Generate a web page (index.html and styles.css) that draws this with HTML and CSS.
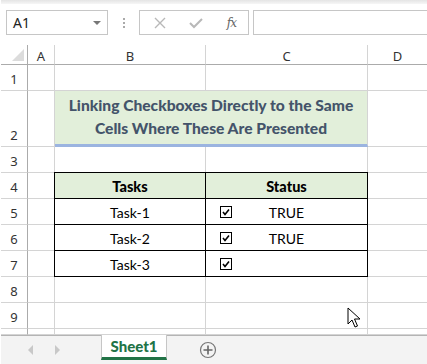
FILE: index.html
```html
<!DOCTYPE html>
<html lang="en">
<head>
    <meta charset="UTF-8">
    <meta name="viewport" content="width=device-width, initial-scale=1.0">
    <title>Linking Checkboxes</title>
    <link rel="stylesheet" href="styles.css">
</head>
<body>
    <div class="app">
        <div class="topstrip"></div>
        <div class="formula-row">
            <div class="namebox">
                <span>A1</span>
                <span class="caret"></span>
            </div>
            <div class="dots">
                <span></span><span></span><span></span>
            </div>
            <div class="fbuttons">
                <svg class="ico" width="12" height="12" viewBox="0 0 12 12">
                    <path d="M1 1 L11 11 M11 1 L1 11" stroke="#b8b8b8" stroke-width="1.4" fill="none"/>
                </svg>
                <svg class="ico" width="14" height="12" viewBox="0 0 14 12">
                    <path d="M1 6 L5 10 L13 2" stroke="#b8b8b8" stroke-width="2" fill="none"/>
                </svg>
                <span class="fx">fx</span>
            </div>
            <div class="fbar"></div>
        </div>

        <div class="sheet">
            <div class="corner"><span></span></div>
            <div class="colhead">A</div>
            <div class="colhead">B</div>
            <div class="colhead">C</div>
            <div class="colhead">D</div>

            <div class="rowhead r26">1</div>
            <div class="cell"></div><div class="cell"></div><div class="cell"></div><div class="cell"></div>

            <div class="rowhead r56">2</div>
            <div class="cell"></div>
            <div class="title">Linking Checkboxes Directly to the Same<br>Cells Where These Are Presented</div>
            <div class="cell"></div>

            <div class="rowhead r26">3</div>
            <div class="cell"></div><div class="cell"></div><div class="cell"></div><div class="cell"></div>

            <div class="rowhead r26">4</div>
            <div class="cell"></div>
            <div class="tcell thead tl">Tasks</div>
            <div class="tcell thead tr">Status</div>
            <div class="cell"></div>

            <div class="rowhead r26">5</div>
            <div class="cell"></div>
            <div class="tcell tl">Task-1</div>
            <div class="tcell tr status"><span class="cbox"><svg width="10" height="10" viewBox="0 0 10 10"><path d="M2 5 L4 7.5 L8 2.5" stroke="#000" stroke-width="1.6" fill="none"/></svg></span><span class="val">TRUE</span></div>
            <div class="cell"></div>

            <div class="rowhead r26">6</div>
            <div class="cell"></div>
            <div class="tcell tl">Task-2</div>
            <div class="tcell tr status"><span class="cbox"><svg width="10" height="10" viewBox="0 0 10 10"><path d="M2 5 L4 7.5 L8 2.5" stroke="#000" stroke-width="1.6" fill="none"/></svg></span><span class="val">TRUE</span></div>
            <div class="cell"></div>

            <div class="rowhead r26">7</div>
            <div class="cell"></div>
            <div class="tcell tl">Task-3</div>
            <div class="tcell tr status"><span class="cbox"><svg width="10" height="10" viewBox="0 0 10 10"><path d="M2 5 L4 7.5 L8 2.5" stroke="#000" stroke-width="1.6" fill="none"/></svg></span><span class="val"></span></div>
            <div class="cell"></div>

            <div class="rowhead r26">8</div>
            <div class="cell"></div><div class="cell"></div><div class="cell"></div><div class="cell"></div>

            <div class="rowhead r26">9</div>
            <div class="cell"></div><div class="cell"></div><div class="cell"></div><div class="cell"></div>

            <div class="rowhead r6"></div>
            <div class="cell"></div><div class="cell"></div><div class="cell"></div><div class="cell"></div>

            <svg class="cursor" width="14" height="22" viewBox="0 0 14 22">
                <path d="M1 1 L1 17 L5 13 L8 20 L10.5 19 L7.5 12 L13 12 Z" fill="#fff" stroke="#000" stroke-width="1" stroke-linejoin="miter"/>
            </svg>
        </div>

        <div class="tabbar">
            <div class="navs">
                <span class="arr left"></span>
                <span class="arr right"></span>
            </div>
            <div class="tab">Sheet1</div>
            <div class="addsheet">
                <svg width="18" height="18" viewBox="0 0 18 18">
                    <circle cx="9" cy="9" r="7.5" fill="none" stroke="#777" stroke-width="1.2"/>
                    <path d="M9 4.5 V13.5 M4.5 9 H13.5" stroke="#666" stroke-width="1.6"/>
                </svg>
            </div>
        </div>
    </div>
</body>
</html>
```

FILE: styles.css
```css
* {
    margin: 0;
    padding: 0;
    box-sizing: border-box;
}
body {
    background: #fff;
    font-family: Lato, "Liberation Sans", sans-serif;
    width: 427px;
    height: 364px;
    overflow: hidden;
}
.app {
    display: flex;
    flex-direction: column;
    height: 364px;
    border-left: 1px solid #fff;
}
.topstrip {
    height: 4px;
    background: linear-gradient(#e4e4e4, #f6f6f6);
}
.formula-row {
    display: flex;
    align-items: center;
    height: 25px;
    margin-top: 6px;
    padding-left: 5px;
}
.namebox {
    width: 102px;
    height: 25px;
    border: 1px solid #c6c6c6;
    display: flex;
    align-items: center;
    justify-content: space-between;
    padding: 0 6px 0 6px;
    font-family: "Noto Sans", sans-serif;
    font-size: 14px;
    color: #222;
}
.caret {
    width: 0;
    height: 0;
    border-left: 4px solid transparent;
    border-right: 4px solid transparent;
    border-top: 4px solid #777;
}
.dots {
    width: 31px;
    display: flex;
    flex-direction: column;
    align-items: center;
    gap: 2px;
}
.dots span {
    width: 2px;
    height: 2px;
    background: #aaa;
}
.fbuttons {
    width: 110px;
    height: 25px;
    border: 1px solid #c6c6c6;
    display: flex;
    align-items: center;
    justify-content: space-between;
    padding: 0 12px 0 14px;
}
.fx {
    font-family: "DejaVu Serif", serif;
    font-style: italic;
    font-size: 12px;
    color: #666;
    letter-spacing: -1px;
}
.fbar {
    flex: 1;
    height: 25px;
    margin-left: 4px;
    border: 1px solid #c6c6c6;
    border-right: none;
}
.sheet {
    position: relative;
    margin-top: 10px;
    display: grid;
    grid-template-columns: 27px 27px 151px 162px 60px;
    grid-template-rows: 20px 26px 56px 26px 26px 26px 26px 26px 26px 26px 6px;
    font-family: Lato, "Liberation Sans", sans-serif;
}
.corner {
    border-right: 1px solid #ababab;
    border-bottom: 1px solid #ababab;
    position: relative;
}
.corner span {
    position: absolute;
    right: 3px;
    bottom: 3px;
    width: 0;
    height: 0;
    border-left: 12px solid transparent;
    border-bottom: 12px solid #dcdcdc;
}
.colhead {
    border-right: 1px solid #d4d4d4;
    border-bottom: 1px solid #ababab;
    display: flex;
    align-items: center;
    justify-content: center;
    font-family: "Noto Sans", sans-serif;
    font-size: 13px;
    color: #333;
    padding-top: 2px;
}
.rowhead {
    border-right: 1px solid #ababab;
    border-bottom: 1px solid #d4d4d4;
    display: flex;
    align-items: flex-end;
    justify-content: center;
    padding-bottom: 2px;
    font-family: "Noto Sans", sans-serif;
    font-size: 13px;
    color: #333;
    line-height: 18px;
}
.cell {
    border-right: 1px solid #d4d4d4;
    border-bottom: 1px solid #d4d4d4;
}
.title {
    grid-column: 3 / span 2;
    background: #e2efda;
    border-bottom: 3px solid #9bb4e0;
    border-right: 1px solid #d4d4d4;
    color: #44546a;
    font-weight: 900;
    font-size: 15.6px;
    line-height: 23px;
    text-align: center;
    padding-top: 3px;
}
.tcell {
    border-bottom: 1px solid #000;
    border-right: 1px solid #000;
    display: flex;
    align-items: center;
    justify-content: center;
    font-size: 14px;
    color: #000;
    padding-top: 1px;
}
.tl {
    border-left: 1px solid #000;
    margin-left: -1px;
}
.thead {
    background: #e2efda;
    border-top: 1px solid #000;
    margin-top: -1px;
    font-weight: 900;
    font-size: 14.5px;
}
.status {
    position: relative;
}
.cbox {
    position: absolute;
    left: 14px;
    top: 7px;
    width: 12px;
    height: 12px;
    border: 1px solid #000;
    background: #fff;
    display: flex;
    align-items: center;
    justify-content: center;
}
.cursor {
    position: absolute;
    left: 346px;
    top: 262px;
}
.tabbar {
    flex: 1;
    display: flex;
    background: #f3f3f3;
    border-top: 1px solid #b4b4b4;
}
.navs {
    width: 100px;
    display: flex;
    align-items: center;
    gap: 22px;
    padding-left: 27px;
}
.arr {
    width: 0;
    height: 0;
    border-top: 5px solid transparent;
    border-bottom: 5px solid transparent;
}
.arr.left {
    border-right: 5px solid #c8c8c8;
}
.arr.right {
    border-left: 5px solid #c8c8c8;
}
.tab {
    width: 66px;
    height: 25px;
    background: #fff;
    border-left: 1px solid #c6c6c6;
    border-right: 1px solid #c6c6c6;
    border-bottom: 3px solid #217346;
    margin-top: -1px;
    display: flex;
    align-items: center;
    justify-content: center;
    color: #217346;
    font-weight: 900;
    font-size: 15px;
}
.addsheet {
    padding: 5px 0 0 32px;
}
```
